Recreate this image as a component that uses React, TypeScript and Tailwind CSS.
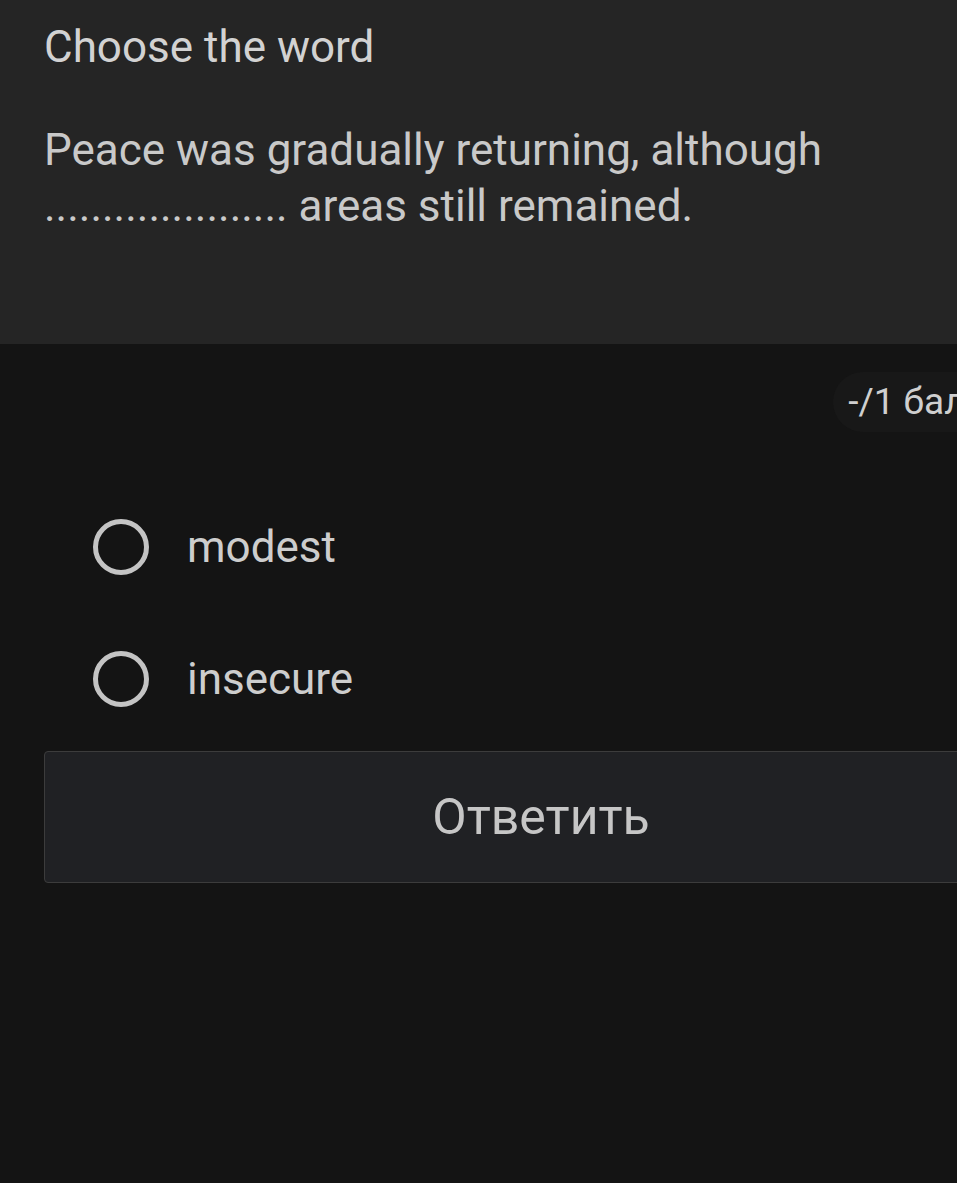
import React from "react"

const options = ["modest", "insecure"]

function Radio() {
  return (
    <span className="block h-[56px] w-[56px] shrink-0 rounded-full border-[5px] border-[#c4c4c4]" />
  )
}

export default function App() {
  return (
    <div className="h-[1183px] w-[957px] overflow-hidden bg-[#141414] font-['Roboto',sans-serif]">
      <div className="w-[1082px]">
        {/* question card */}
        <div className="h-[344px] bg-[#252525] px-[44px] pt-[20px]">
          <h1 className="text-[44px] leading-[54px] text-[#d2d2d2]">Choose the word</h1>
          <p className="mt-[48px] text-[44px] leading-[56px] text-[#c9c9c9]">
            Peace was gradually returning, although
            <br />
            ..................... areas still remained.
          </p>
        </div>

        <div className="px-[44px]">
          <div className="flex justify-end pt-[28px]">
            <span className="mr-[36px] rounded-[30px] bg-[#181818] px-[15px] py-[8px] text-[37px] leading-[44px] text-[#cfcfcf]">
              -/1 балл
            </span>
          </div>

          <div className="mt-[87px] flex flex-col gap-[76px] pl-[49px]">
            {options.map((o) => (
              <label key={o} className="flex h-[56px] items-center gap-[38px]">
                <Radio />
                <span className="text-[44px] text-[#cdcdcd]">{o}</span>
              </label>
            ))}
          </div>

          <button className="mt-[44px] flex h-[132px] w-full items-center justify-center rounded-[4px] border border-[#3c3c3c] bg-[#202124] text-[50px] text-[#c6c6c6]">
            Ответить
          </button>
        </div>
      </div>
    </div>
  )
}
